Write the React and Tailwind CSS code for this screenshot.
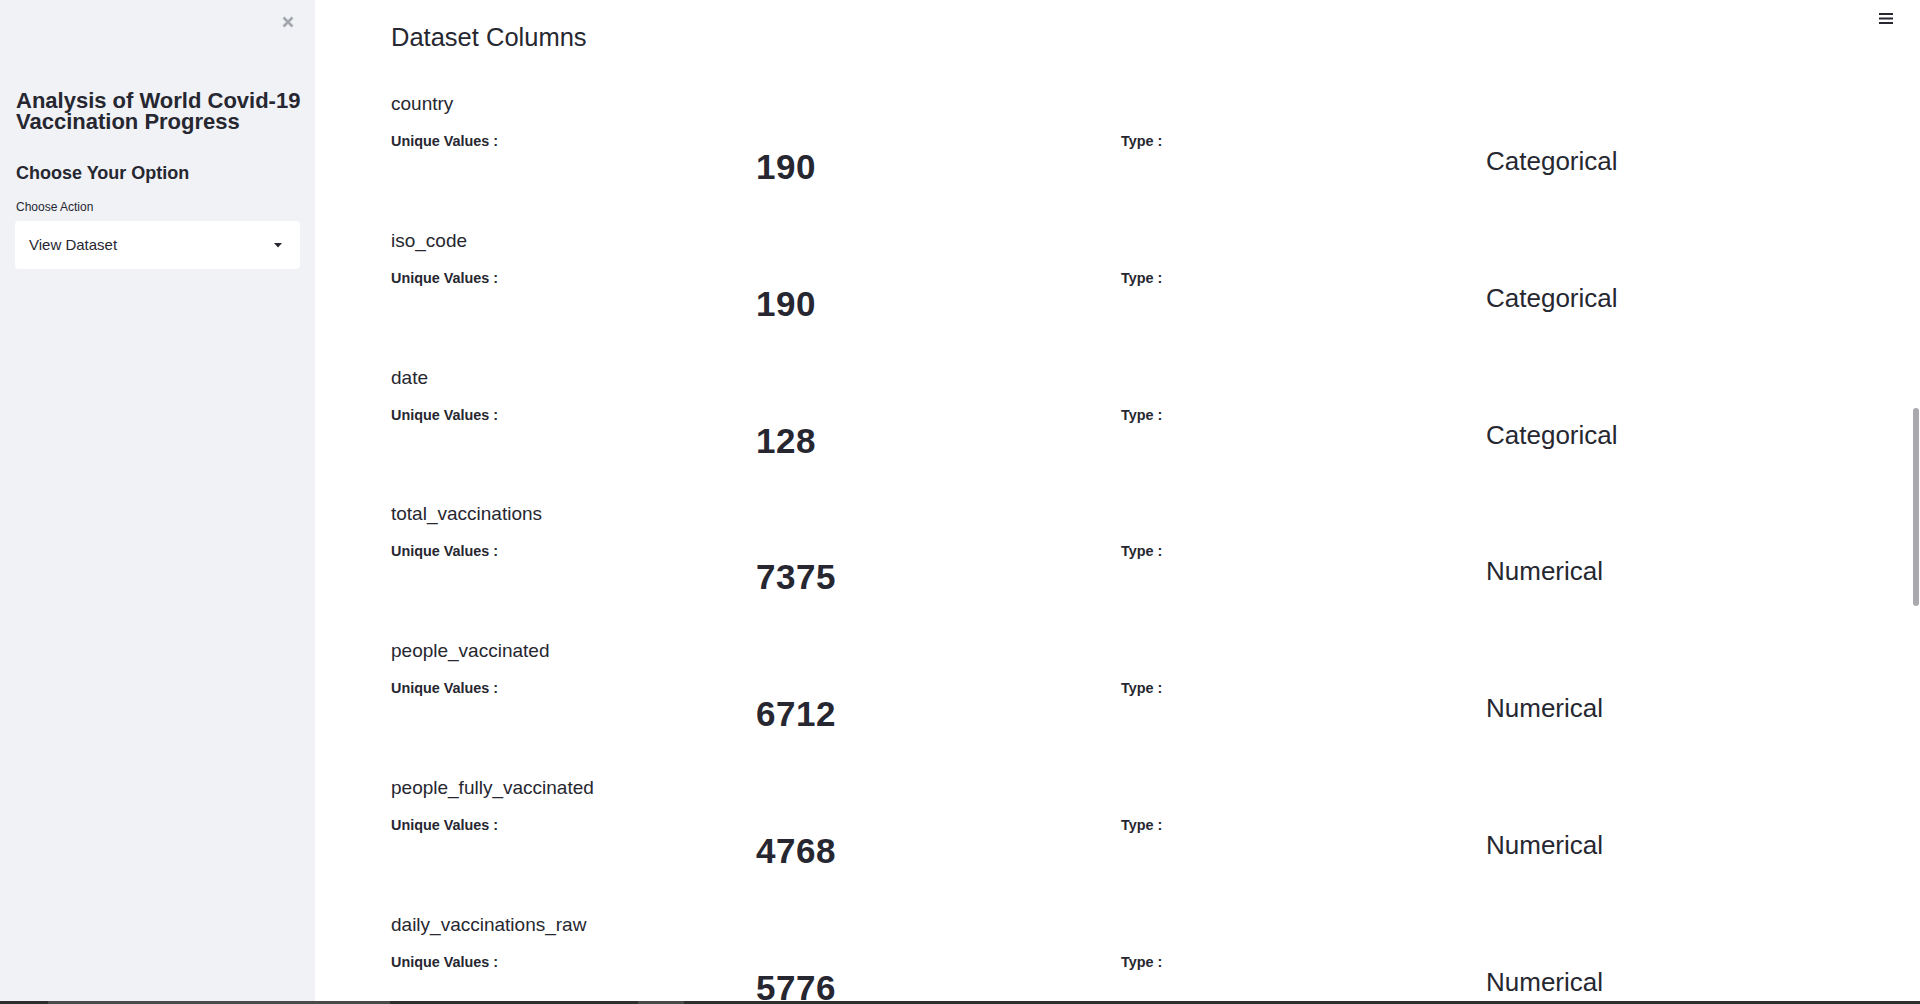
import React from "react";

const columns = [
  { name: "country", unique: 190, type: "Categorical" },
  { name: "iso_code", unique: 190, type: "Categorical" },
  { name: "date", unique: 128, type: "Categorical" },
  { name: "total_vaccinations", unique: 7375, type: "Numerical" },
  { name: "people_vaccinated", unique: 6712, type: "Numerical" },
  { name: "people_fully_vaccinated", unique: 4768, type: "Numerical" },
  { name: "daily_vaccinations_raw", unique: 5776, type: "Numerical" },
];

function Sidebar() {
  return (
    <aside className="w-[315px] shrink-0 bg-[#f0f2f6] px-[16px]">
      <div className="flex h-[44px] items-center justify-end pr-[5px]">
        <svg width="12" height="12" viewBox="0 0 12 12">
          <path d="M1.5 1.5 L10.5 10.5 M10.5 1.5 L1.5 10.5" stroke="#a3a6ad" strokeWidth="2.6" />
        </svg>
      </div>
      <h1 className="mt-[46px] text-[22px] font-bold leading-[21px] text-[#262730]">
        <span className="block whitespace-nowrap">Analysis of World Covid-19</span>
        <span className="block whitespace-nowrap">Vaccination Progress</span>
      </h1>
      <h2 className="mt-[29px] text-[18px] font-bold leading-[24px] text-[#262730]">
        Choose Your Option
      </h2>
      <p className="mt-[14px] text-[12px] leading-[16px] text-[#262730]">Choose Action</p>
      <div className="ml-[-1px] mt-[6px] flex h-[48px] w-[285px] items-center justify-between rounded-[4px] bg-white pl-[14px] pr-[18px]">
        <span className="text-[15px] leading-[20px] text-[#262730]">View Dataset</span>
        <svg width="8" height="5" viewBox="0 0 8 5">
          <path d="M0 0 H8 L4 4.5 Z" fill="#262730" />
        </svg>
      </div>
    </aside>
  );
}

function ColumnRow({ col }) {
  return (
    <div className="h-[136.8px]">
      <div className="text-[19px] leading-[24px]">{col.name}</div>
      <div className="mt-[15px] grid w-[1460px] grid-cols-4">
        <div className="text-[14.4px] font-bold leading-[20px]">Unique Values :</div>
        <div className="pt-[16px] text-[35px] font-bold leading-[40px] tracking-[0.5px]">
          {col.unique}
        </div>
        <div className="text-[14.4px] font-bold leading-[20px]">Type :</div>
        <div className="pt-[15px] text-[26px] leading-[30px]">{col.type}</div>
      </div>
    </div>
  );
}

export default function App() {
  return (
    <div className="relative flex h-[1004px] w-[1920px] overflow-hidden bg-white font-['Liberation_Sans',Arial,sans-serif] text-[#262730]">
      <Sidebar />
      <main className="relative flex-1 overflow-hidden pl-[76px] pt-[22px]">
        <h3 className="text-[25.5px] font-normal leading-[30px]">Dataset Columns</h3>
        <div className="mt-[40px]">
          {columns.map((c) => (
            <ColumnRow key={c.name} col={c} />
          ))}
        </div>
      </main>

      {/* hamburger menu */}
      <button type="button" className="absolute right-[27px] top-[12px]">
        <svg width="14" height="12" viewBox="0 0 14 12">
          <rect x="0" y="1" width="14" height="2" fill="#262730" />
          <rect x="0" y="5.5" width="14" height="2" fill="#262730" />
          <rect x="0" y="10" width="14" height="2" fill="#262730" />
        </svg>
      </button>

      {/* scrollbar thumb */}
      <div className="absolute right-[1px] top-[408px] h-[198px] w-[6px] rounded-full bg-[#a9a9ae]" />

      {/* bottom bar */}
      <div className="absolute bottom-0 left-0 flex h-[3px] w-full bg-[#2e2e2e]">
        <div className="ml-[48px] w-[342px] bg-[#4a4a4a]" />
        <div className="ml-[248px] w-[46px] bg-[#4a4a4a]" />
      </div>
    </div>
  );
}
